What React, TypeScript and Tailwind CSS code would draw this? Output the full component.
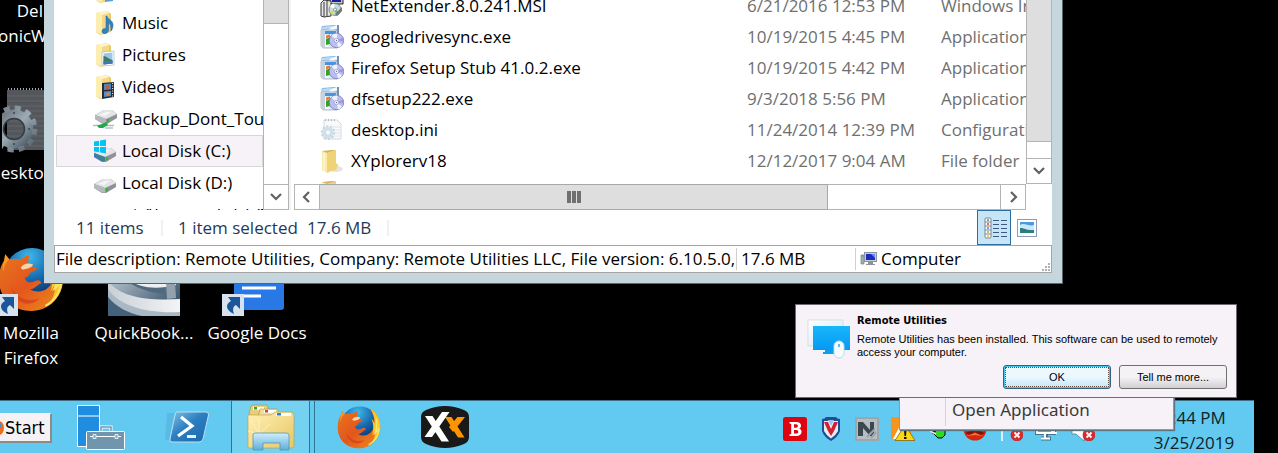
import type { ReactNode } from "react";

const uiFont = "font-['Open_Sans','Noto_Sans',sans-serif]";
const dialogFont = "font-['Liberation_Sans',sans-serif]";

/* ---------- small icons ---------- */

function FolderBase() {
  return (
    <>
      <path d="M3 2 L14 0 L18 3 V21 L7 24 L3 21 Z" fill="#e9c968" />
      <path d="M3 2 L9 4 V24 L3 21 Z" fill="#fbeeb0" />
      <path d="M9 4 L16 2 V20 L9 24 Z" fill="#f3d985" />
      <path d="M3 2 L14 0 L16 2 L9 4 Z" fill="#fdf5cd" />
    </>
  );
}

function TreeIcon({ kind }: { kind: string }) {
  return (
    <svg viewBox="0 0 24 24" className="h-6 w-6 shrink-0" aria-hidden="true">
      {kind === "document" && (
        <>
          <FolderBase />
          <path d="M12 10h8v12l-8 1z" fill="#5b9bd8" />
        </>
      )}
      {kind === "music" && (
        <>
          <FolderBase />
          <path d="M14 5 C15 9 20 9 20 14 C20 17 19 19 18 20 C18 16 18 13 15.500 12 V19 C15.500 23 9 24 9 20.500 C9 18 11 17 13 17.500 V5 Z" fill="#2f83c4" stroke="#1c5f9a" strokeWidth=".5" />
        </>
      )}
      {kind === "picture" && (
        <>
          <FolderBase />
          <path d="M9 9l12-1v14l-12 1z" fill="#fff" stroke="#aab8c4" strokeWidth=".7" />
          <path d="M10.500 10.500l9-1v11l-9 1z" fill="#9cc7ea" />
          <path d="M10.500 13c3 0 5 3 9 4v3.500l-9 1z" fill="#3f7d62" />
          <path d="M10.500 18l9 0v2.500l-9 1z" fill="#3e78b8" />
        </>
      )}
      {kind === "video" && (
        <>
          <FolderBase />
          <path d="M9 8l12-1v15l-12 2z" fill="#2b2b33" />
          <path d="M11 9l7-.5v6l-7 .5z" fill="#4b86c5" />
          <path d="M11 16.500l7-.5v5l-7 1z" fill="#4f8fd0" />
          <circle cx="14.500" cy="12" r="2" fill="#c65b3b" />
          <circle cx="15" cy="19" r="1.700" fill="#d68a32" />
          <path d="M19.600 8v14" stroke="#d9dde2" strokeWidth="1.200" strokeDasharray="1 1.500" />
        </>
      )}
      {["network", "windows", "disk"].includes(kind) && (
        <g transform={kind === "network" ? "translate(1 -5)" : kind === "windows" ? "translate(0 1)" : ""}>
          <path d="M1 13 L10 8 H18 L23 12 V16 L13 22 H9 L1 17 Z" fill="#8f9297" />
          <path d="M1 13 L10 8 H18 L23 12 L12 17 Z" fill="#e2e4e6" />
          <path d="M1 13 L12 17 V21.500 L9 21.500 L1 17 Z" fill={kind === "windows" ? "#3f7fa0" : "#b5b8bc"} />
          <path d="M5 13 L12 10 H17 L11 14Z" fill="#f6f6f7" />
          <rect x="13" y="17" width="2" height="3.500" fill="#36b52f" />
        </g>
      )}
      {kind === "windows" && (
        <path d="M1 2.500l5-.8v5.300h-5zM7 1.500l6-1v6.500h-6zM1 8h5v5.300l-5-.8zM7 8h6v6.400l-6-1z" fill="#00c4f4" />
      )}
      {kind === "network" && (
        <>
          <path d="M0 18.500h21" stroke="#b4bbc0" strokeWidth="1.500" />
          <path d="M4 18.500c4-1 7-2 9-3.500l2 3-5 3H6z" fill="#1da94a" />
          <path d="M12 21h8" stroke="#c9cfd3" strokeWidth="2" />
        </>
      )}
    </svg>
  );
}

function FileIcon({ kind }: { kind: string }) {
  return (
    <svg viewBox="0 0 24 24" className="h-6 w-6 shrink-0" aria-hidden="true">
      {kind === "setup" && (
        <>
          <path d="M2 1L15 0l4 1v8H1z" fill="#7fb2e8" />
          <path d="M1 2l9-1 5 1-5 4H1z" fill="#b9d8f5" />
          <path d="M11 2l6-2 2 3-5 2-6 1z" fill="#f3f8fd" />
          <path d="M17 0h2v8h-2z" fill="#7590b4" />
          <path d="M1 5h16v18H3l-2-2z" fill="#dbeafa" stroke="#8497ab" strokeWidth=".6" />
          <path d="M1 5h4v18H3l-2-2z" fill="#c9d2dc" />
          <path d="M5 6h11v3H5z" fill="#4a93dd" />
          <path d="M5 10h4v12H5z" fill="#f8fbff" />
          <path d="M6 14l4-2v7l-4 1z" fill="#2fa32b" />
          <path d="M6 10.500l4-1V12l-4 1.500z" fill="#e77a35" />
          <circle cx="16.500" cy="15.500" r="7.200" fill="#bcbdf0" stroke="#7478b0" strokeWidth=".8" />
          <path d="M16.500 15.500 11.500 10.500a7 7 0 0 1 6-1.800zM16.500 15.500l5.500 4a7 7 0 0 1-4 3z" fill="#f0f2fe" />
          <path d="M16.500 15.500l6.500-3a7 7 0 0 1 .3 4z" fill="#9a98e4" />
          <circle cx="16.500" cy="15.500" r="2.200" fill="#f8f8ff" stroke="#8488b8" strokeWidth=".6" />
          <circle cx="16.500" cy="15.500" r=".7" fill="#6b6f9c" />
        </>
      )}
      {kind === "msi" && (
        <>
          <path d="M10 1h13v9H10z" fill="#c7c7c7" stroke="#222" />
          <path d="M12 2h9v6h-9z" fill="#1a1f9e" />
          <path d="M1 9l3-3 7 1v15l-7 1-3-1z" fill="#e5e5e5" stroke="#333" strokeWidth="1" />
          <path d="M4 8v15M7 7v16" stroke="#555" strokeWidth="1.200" />
          <circle cx="15" cy="15.500" r="6" fill="#bfe0dd" stroke="#666" strokeWidth=".7" />
          <path d="M15 15.500l-5-3a6 6 0 0 1 4-3z" fill="#fff" />
          <path d="M15 15.500l5 3a6 6 0 0 1-4 3z" fill="#47b9bd" />
          <path d="M15 15.500l-3 5.500-2-3z" fill="#e6d44a" />
          <circle cx="15" cy="15.500" r="1.500" fill="#fff" stroke="#555" strokeWidth=".6" />
          <path d="M15 20l7-7v4l-5 5z" fill="#777" />
        </>
      )}
      {kind === "ini" && (
        <>
          <path d="M4 2h13l4 4v15H4z" fill="#f8f9fb" stroke="#d3d8e0" />
          <path d="M5 2h12" stroke="#b6bcc5" strokeDasharray="1 2" strokeWidth="2" />
          <path d="M12 9h8M14 12h6M14 15h6M14 18h6" stroke="#dfe4ee" />
          <circle cx="8" cy="14.500" r="4.500" fill="none" stroke="#d2e0ea" strokeWidth="3" />
          <circle cx="8" cy="14.500" r="6.500" fill="none" stroke="#bfd2e0" strokeWidth="1.500" strokeDasharray="2 2" />
          <circle cx="8" cy="14.500" r="2.700" fill="none" stroke="#a9c2d4" strokeWidth=".6" />
        </>
      )}
      {kind === "folder" && (
        <>
          <ellipse cx="16" cy="20" rx="7" ry="3" fill="#e4e4e4" />
          <path d="M2 2l5 2v20l-5-3z" fill="#f9ecaa" />
          <path d="M7 4l9-3v19l-9 4z" fill="#f0d377" />
          <path d="M2 2l10-1h4l-9 3z" fill="#d4b357" />
          <path d="M14 15c2-1 5 0 4 2l-2 4-4 1z" fill="#f1d471" />
          <path d="M4 4v17" stroke="#fffbe0" />
        </>
      )}
    </svg>
  );
}

function Firefox({ className }: { className: string }) {
  return (
    <svg viewBox="0 0 64 64" className={className} aria-hidden="true">
      <defs>
        <radialGradient id="fxGlobe" cx="45%" cy="15%" r="80%">
          <stop offset="0" stopColor="#3fb8ea" />
          <stop offset=".5" stopColor="#1668ae" />
          <stop offset="1" stopColor="#0b2458" />
        </radialGradient>
        <linearGradient id="fxFur" x1="0" y1="0" x2="1" y2="1">
          <stop offset="0" stopColor="#e8781f" />
          <stop offset=".5" stopColor="#e3561c" />
          <stop offset="1" stopColor="#ee8f1d" />
        </linearGradient>
      </defs>
      <circle cx="33" cy="30" r="28" fill="url(#fxGlobe)" />
      <path d="M48 5c9 5 15 15 15 27c0 17-13 31-31 31C14 63 1 50 1 33C1 24 3 18 6 14l1-6 4 5c4-1 7-1 11 0c4-3 6-4 9-4c-2 4-2 6-1 9c1 2 5 2 8 3c-1 3-4 4-7 5c-1 3-2 4-5 5c1 5 6 5 10 3c3-2 6 0 6 2c-4 1-5 5-11 6c10 6 22-1 23-13c1-9-2-17-6-24z" fill="url(#fxFur)" />
      <path d="M48 5c10 6 15 16 15 27c0 11-6 21-15 26c5-6 8-13 7-20l-4 6c3-10 2-18-1-24c3 2 4 5 5 7c0-8-2-15-7-22z" fill="#fbc928" />
      <path d="M57 20c2 8 1 15-2 21c3-2 5-5 6-8c0 11-6 20-15 25" fill="none" stroke="#f5e66e" strokeWidth="2" />
      <path d="M7 8l4 5c-4 3-5 7-6 12c-1-4 0-8 1-11z" fill="#f59a25" />
      <path d="M22 21c3-4 7-5 12-3c-1 3-5 4-10 5z" fill="#f6d4a6" />
      <path d="M12 36c3 14 16 19 28 15c-8 9-24 7-28-15z" fill="#cf3b1b" opacity=".65" />
    </svg>
  );
}

function ShortcutArrow() {
  return (
    <svg viewBox="0 0 22 22" className="absolute bottom-0 left-0 h-[22px] w-[22px]" aria-hidden="true">
      <path d="M0 0h22v22H0z" fill="#d6e3ef" />
      <path d="M6 3h12v12l-4-4c-4 2-3 6-2 9c-7-3-10-9-3-13z" fill="#1c5598" />
    </svg>
  );
}

/* ---------- file manager window ---------- */

const tree = [
  { label: "Documents", kind: "document" },
  { label: "Music", kind: "music" },
  { label: "Pictures", kind: "picture" },
  { label: "Videos", kind: "video" },
  { label: "Backup_Dont_Touch", kind: "network" },
  { label: "Local Disk (C:)", kind: "windows", selected: true },
  { label: "Local Disk (D:)", kind: "disk" },
  { label: "c$ (\\\\server-bdc) (Z:)", kind: "disk" },
];

const files = [
  ["NetExtender.8.0.241.MSI", "6/21/2016 12:53 PM", "Windows Installer", "msi"],
  ["googledrivesync.exe", "10/19/2015 4:45 PM", "Application", "setup"],
  ["Firefox Setup Stub 41.0.2.exe", "10/19/2015 4:42 PM", "Application", "setup"],
  ["dfsetup222.exe", "9/3/2018 5:56 PM", "Application", "setup"],
  ["desktop.ini", "11/24/2014 12:39 PM", "Configuration", "ini"],
  ["XYplorerv18", "12/12/2017 9:04 AM", "File folder", "folder"],
  ["", "", "", "folder"],
];

const chevrons = {
  down: "M3 5l5 5 5-5",
  left: "M10 3l-5 5 5 5",
  right: "M6 3l5 5-5 5",
};

function ScrollButton({ dir, label }: { dir: keyof typeof chevrons; label: string }) {
  return (
    <button
      type="button"
      aria-label={label}
      className="flex h-[26px] w-[26px] shrink-0 items-center justify-center border border-[#b4b4b4] bg-white"
    >
      <svg viewBox="0 0 16 16" className="h-4 w-4" aria-hidden="true">
        <path d={chevrons[dir]} fill="none" stroke="#606060" strokeWidth="2.200" />
      </svg>
    </button>
  );
}

function FileWindow() {
  return (
    <section
      aria-label="File manager"
      className="absolute left-11 top-0 w-[1019px] border-b border-r border-[#55666d] bg-[#c5d6dd] px-[10px] pb-[10px] text-[17px] leading-[22px]"
    >
      <div className="bg-white">
        <div className="flex h-[210px]">
          <nav aria-label="Folders" className="w-[209px] overflow-hidden pl-[2px]">
            <ul className="-mt-[25px]">
              {tree.map((t) => (
                <li key={t.label}>
                  <a
                    href="#folder"
                    className={
                      t.selected
                        ? "flex h-8 items-center gap-[5px] whitespace-nowrap border border-[#d8d6d9] bg-[#f6f2f7] pl-9"
                        : "flex h-8 items-center gap-[5px] whitespace-nowrap border border-transparent pl-9"
                    }
                  >
                    <TreeIcon kind={t.kind} />
                    {t.label}
                  </a>
                </li>
              ))}
            </ul>
          </nav>
          <div className="flex w-[26px] flex-col">
            <div className="h-6 border border-t-0 border-[#b4b4b4] bg-[#dedede]" />
            <div className="flex-1 border-x border-[#b4b4b4]" />
            <ScrollButton dir="down" label="Scroll folders down" />
          </div>
          <div className="mr-[3px] w-[2px] bg-[#f3f3f3]" />
          <div className="flex min-w-0 flex-1 flex-col">
            <div className="flex h-[184px]">
              <div className="min-w-0 flex-1 overflow-hidden">
                <table className="-mt-[10px] w-full table-fixed border-collapse">
                  <tbody>
                    {files.map(([name, date, type, kind], i) => (
                      <tr key={i} className="h-[31px] whitespace-nowrap text-[#6f6f6f]">
                        <td className="w-[453px] p-0 pl-[26px] text-black">
                          <span className="flex items-center gap-[7px]">
                            <FileIcon kind={kind} />
                            {name}
                          </span>
                        </td>
                        <td className="w-[194px] p-0">{date}</td>
                        <td className="overflow-hidden p-0">{type}</td>
                      </tr>
                    ))}
                  </tbody>
                </table>
              </div>
              <div className="flex w-[26px] flex-col">
                <div className="h-[142px] border border-t-0 border-[#b4b4b4] bg-[#dedede]" />
                <div className="flex-1 border-x border-[#b4b4b4]" />
                <ScrollButton dir="down" label="Scroll files down" />
              </div>
            </div>
            <div className="mr-[26px] flex h-[26px]">
              <ScrollButton dir="left" label="Scroll left" />
              <div className="flex w-[508px] items-center justify-center gap-px border border-l-0 border-[#a8a8a8] bg-[#dedede]">
                <span className="h-3 w-1 bg-[#707070]" />
                <span className="h-3 w-1 bg-[#707070]" />
                <span className="h-3 w-1 bg-[#707070]" />
              </div>
              <div className="flex-1 border-y border-[#b4b4b4]" />
              <ScrollButton dir="right" label="Scroll right" />
            </div>
          </div>
        </div>

        <div className="flex h-[35px] items-center pl-[22px] text-[#1e395b]">
          <span className="w-[85px]">11 items</span>
          <span className="h-4 w-[2px] bg-[#f1f1f1]" />
          <span className="ml-[15px] w-[129px] whitespace-nowrap">1 item selected</span>
          <span className="w-20">17.6 MB</span>
          <span className="h-4 w-[2px] bg-[#f1f1f1]" />
          <button
            type="button"
            aria-label="Details view"
            className="ml-auto flex h-[35px] w-[34px] items-center justify-center border border-[#2f6f9f] bg-[#c6e5f7]"
          >
            <svg viewBox="0 0 24 24" className="ml-[2px] h-6 w-6" aria-hidden="true">
              <rect x="2" y="2" width="6" height="20" rx="1" fill="#fff" stroke="#7d8693" />
              <path d="M2 6h6M2 10h6M2 14h6M2 18h6" stroke="#7d8693" />
              <path d="M4 4h2" stroke="#459a67" strokeWidth="1.500" />
              <path d="M4 8h2" stroke="#dd3535" strokeWidth="1.500" />
              <path d="M4 12h2" stroke="#3c7fd6" strokeWidth="1.500" />
              <path d="M4 16h2" stroke="#95b82c" strokeWidth="1.500" />
              <path d="M4 20h2" stroke="#e6c51e" strokeWidth="1.500" />
              <path d="M10 4.500h6m2 0h6M10 8.500h6m2 0h6M10 12.500h6m2 0h6M10 16.500h6m2 0h6M10 20.500h6m2 0h6" stroke="#3d5a80" />
            </svg>
          </button>
          <button type="button" aria-label="Thumbnail view" className="ml-[6px] mr-[15px]">
            <svg viewBox="0 0 20 18" className="h-[18px] w-5" aria-hidden="true">
              <rect x=".5" y=".5" width="19" height="17" fill="#fff" stroke="#8f9cb5" />
              <path d="M3 3h14v11H3z" fill="#4a9be0" />
              <path d="M3 6c4-3 9 2 14 0v5H3z" fill="#c9e9f5" />
              <path d="M3 9c5 0 7 3 14 2v3H3z" fill="#2a7f7c" />
            </svg>
          </button>
        </div>

        <div className="flex h-7 items-center border border-[#a5a5a5]">
          <span className="w-[682px] overflow-hidden whitespace-nowrap border-r border-[#d0d0d0] pl-px">
            File description: Remote Utilities, Company: Remote Utilities LLC, File version: 6.10.5.0,
          </span>
          <span className="w-[119px] border-r border-[#d0d0d0] pl-1">17.6 MB</span>
          <span className="flex items-center gap-1 pl-1">
            <svg viewBox="0 0 17 16" className="h-4 w-[17px]" aria-hidden="true">
              <path d="M1 4h3v9H1z" fill="#a9adb3" stroke="#777c84" strokeWidth=".7" />
              <path d="M1.500 5h2" stroke="#48b848" />
              <rect x="4.500" y="1.500" width="12" height="9" fill="#c6cbd4" stroke="#8d93a0" />
              <path d="M6 3h9v6H6z" fill="#1a2bc0" />
              <path d="M11 3h4v4z" fill="#6d8bf0" />
              <path d="M8 11h5v2H8zM6 13h9v1H6z" fill="#8d9299" />
            </svg>
            Computer
          </span>
          <svg viewBox="0 0 12 12" className="ml-auto h-3 w-3 self-end" aria-hidden="true">
            <path d="M9 2h2v2H9zM9 5h2v2H9zM9 8h2v2H9zM6 5h2v2H6zM6 8h2v2H6zM3 8h2v2H3z" fill="#b1b1b1" transform="translate(0 1)" />
          </svg>
        </div>
      </div>
    </section>
  );
}

/* ---------- desktop ---------- */

function Desktop() {
  return (
    <div className="text-center text-[17px] leading-[25px] text-white">
      <div className="absolute -left-4 -top-[2px] w-24">
        Dell
        <br />
        SonicWALL
      </div>
      <a href="#desktop-ini" className="absolute -left-4 top-[86px] flex w-[100px] flex-col items-center">
        <svg viewBox="0 0 64 70" className="h-[70px] w-16" aria-hidden="true">
          <defs>
            <linearGradient id="gearSteel" x1="0" y1="0" x2="1" y2="1">
              <stop offset="0" stopColor="#69727b" />
              <stop offset=".5" stopColor="#9dabb5" />
              <stop offset="1" stopColor="#4c5a66" />
            </linearGradient>
          </defs>
          <path d="M5 4h44v60H5z" fill="#53565a" />
          <path d="M5 10h44M5 15h44M5 20h44M5 25h44M5 30h44M5 35h44M5 40h44M5 45h44M5 50h44M5 55h44M5 60h44" stroke="#65686c" />
          <path d="M6 3h44" stroke="#a3a5a8" strokeWidth="2" strokeDasharray="1 2" />
          <circle cx="12" cy="43" r="15" fill="none" stroke="url(#gearSteel)" strokeWidth="9" />
          <circle cx="12" cy="43" r="21" fill="none" stroke="url(#gearSteel)" strokeWidth="5" strokeDasharray="6 5" />
          <circle cx="12" cy="43" r="10.500" fill="none" stroke="#333b43" strokeWidth="1.500" />
          <circle cx="12" cy="27" r="1" fill="#39434c" />
          <circle cx="27" cy="43" r="1" fill="#39434c" />
          <circle cx="12" cy="58" r="1" fill="#39434c" />
        </svg>
        <span className="mt-1">desktop.ini</span>
      </a>
      <a href="#firefox" className="absolute left-0 top-[245px] w-[62px]">
        <span className="relative -ml-[2px] block h-[71px]">
          <Firefox className="h-[68px] w-[66px] max-w-none" />
          <span className="absolute -left-[2px] bottom-0 h-[22px] w-[22px]">
            <ShortcutArrow />
          </span>
        </span>
        <span className="mt-1 block">Mozilla Firefox</span>
      </a>
      <a href="#quickbooks" className="absolute left-[92px] top-[245px] flex w-[104px] flex-col items-center">
        <svg viewBox="0 0 72 71" className="h-[71px] w-[72px]" aria-hidden="true">
          <defs>
            <linearGradient id="qbBack" x1="0" y1="0" x2="1" y2="1">
              <stop offset="0" stopColor="#e5edf2" />
              <stop offset=".5" stopColor="#8496a5" />
              <stop offset="1" stopColor="#24425c" />
            </linearGradient>
            <linearGradient id="qbBand" x1="0" y1="0" x2="1" y2="0">
              <stop offset="0" stopColor="#c7d0d7" />
              <stop offset="1" stopColor="#f4f4f6" />
            </linearGradient>
          </defs>
          <path d="M0 0h72v71H0z" fill="url(#qbBack)" />
          <path d="M0 36c12 16 38 20 72 18v14c-34 3-64-8-72-24z" fill="url(#qbBand)" />
          <path d="M0 44c10 16 38 25 72 23v4H20C10 66 3 58 0 50z" fill="#a9b8c4" />
          <path d="M0 52c8 10 20 16 34 19H0z" fill="#43617a" />
          <path d="M20 37c12 8 28 12 38 12l-2-10z" fill="#52687c" />
          <path d="M18 34h50v6c-20 5-36 3-50-6z" fill="#edf0f2" />
          <path d="M58 36l9 2 1 15-9 1z" fill="#92a1ad" />
        </svg>
        <span className="mt-1">QuickBook...</span>
      </a>
      <a href="#google-docs" className="absolute left-[200px] top-[245px] flex w-[114px] flex-col items-center">
        <span className="relative -ml-1 h-[71px] w-[66px]">
          <svg viewBox="0 0 66 71" className="h-[71px] w-[66px]" aria-hidden="true">
            <path d="M12 0h50v62q0 3-3 3H15q-3 0-3-3z" fill="#2878e5" />
            <path d="M20 43h34M20 51h19" stroke="#fff" strokeWidth="3" />
          </svg>
          <ShortcutArrow />
        </span>
        <span className="mt-1">Google Docs</span>
      </a>
    </div>
  );
}

/* ---------- taskbar ---------- */

function Slot({ label, children }: { label: string; children: ReactNode }) {
  return (
    <button type="button" aria-label={label} className="flex w-[86px] items-center justify-center">
      {children}
    </button>
  );
}

function TrayIcon({ kind }: { kind: string }) {
  return (
    <svg viewBox="0 0 24 24" className="h-6 w-6" aria-hidden="true">
      {kind === "Bitdefender" && (
        <>
          <rect width="24" height="24" rx="2.500" fill="#dc0510" />
          <path fillRule="evenodd" d="M6.500 5h7c5 0 6 5 2.700 6.600c4 1.400 3 7.400-2.700 7.400h-7v-1.500l1.700-.5V7l-1.700-.5zM11 7.300v3.500h2c2.500 0 2.500-3.500 0-3.500zM11 13v3.600h2.300c2.700 0 2.700-3.600 0-3.600z" fill="#fff" />
        </>
      )}
      {kind === "Security shield" && (
        <>
          <path d="M3 2q3 0 4-2h10q1 2 4 2v12q-2 6-9 10q-7-4-9-10z" fill="#1c4f93" />
          <path d="M5 4h14v10q-2 4-7 7.500q-5-3.500-7-7.500z" fill="#e8edf2" />
          <path d="M5 5h4l3 7 3-7h4l-4 9-3 5-3-5z" fill="#d41f33" />
          <path d="M9 3h6l-3 6z" fill="#97c3e8" />
        </>
      )}
      {kind === "Network monitor" && (
        <>
          <path d="M0 0h24v24H0z" fill="#9da6aa" />
          <path d="M2 2h20v20H2z" fill="#b6bec2" />
          <path d="M3 5h5l7 8V5h4v14h-4L8 11v8H3z" fill="#3c4850" />
          <path d="M12 20l8-8M16 21l5-6" stroke="#9aa4a9" strokeWidth="2" />
        </>
      )}
      {kind === "Warning" && (
        <>
          <path d="M0 0h20v22H0z" fill="#f7941e" />
          <path d="M2 22l9-17 3 3-7 14z" fill="#fff" />
          <path d="M14 8l10 15.500H4z" fill="#fbd615" stroke="#8a6500" strokeWidth=".8" />
          <path d="M13 13h2.500l-.5 6h-1.500zM13 20h2.500v2H13z" fill="#111" />
        </>
      )}
      {kind === "Safely remove hardware" && (
        <>
          <path d="M2 13h8v4H6z" fill="#111" />
          <path d="M9 13h9v5l-3 3h-4l-4-4z" fill="#2bdb24" stroke="#000" />
          <path d="M3 14l6 3" stroke="#eee" strokeWidth="1.500" />
        </>
      )}
      {kind === "Antivirus" && (
        <>
          <circle cx="12" cy="12" r="11.500" fill="#d5260f" />
          <path d="M2 16l10-4 10 4-5 2-5-3-5 3z" fill="#7d140a" />
          <path d="M3 19l9-3 8 3-8-1z" fill="#f67b3b" />
        </>
      )}
      {kind === "Action center" && <path d="M3 2v22M4 3h13v8H4" fill="none" stroke="#fff" strokeWidth="1.500" />}
      {kind === "Network" && (
        <>
          <path d="M2 3h17v13H2zM11 16v5M6 21.500h10" fill="none" stroke="#47738a" strokeWidth="4" />
          <path d="M2 3h17v13H2zM10 16v5M6 21.500h9" fill="#5fb5de" stroke="#fff" strokeWidth="2" />
          <path d="M17 8v8h5" fill="none" stroke="#fff" strokeWidth="2" />
        </>
      )}
      {kind === "Volume" && <path d="M1 9h4l8-6v21l-8-7H1z" fill="#fff" stroke="#47738a" strokeWidth=".7" />}
      {(kind === "Action center" || kind === "Volume") && (
        <>
          <circle cx="18" cy="18" r="6" fill="#dd2b2c" stroke="#b41118" strokeWidth=".6" />
          <path d="M15.500 15.500l5 5M20.500 15.500l-5 5" stroke="#fff" strokeWidth="1.800" />
        </>
      )}
    </svg>
  );
}

const tray = [
  "Bitdefender",
  "Security shield",
  "Network monitor",
  "Warning",
  "Safely remove hardware",
  "Antivirus",
  "Action center",
  "Network",
  "Volume",
];

function Taskbar() {
  return (
    <footer className="mr-6 flex h-[53px] border-t border-[#3f6f86] bg-[#62caf0]">
      <button
        type="button"
        className="mr-[6px] mt-3 flex h-[30px] w-[52px] items-center border-b-2 border-r-2 border-t border-b-[#8b8b8b] border-r-[#8b8b8b] border-t-white bg-[#f5f2f6] font-['DejaVu_Sans_Condensed','DejaVu_Sans',sans-serif] text-lg text-black"
      >
        <svg viewBox="0 0 4 14" className="mr-px h-[14px] w-1 shrink-0" aria-hidden="true">
          <path d="M0 0q4 2 4 7t-4 7z" fill="#ee6b24" />
          <path d="M0 2q2 2 1 5H0z" fill="#3c96c6" />
        </svg>
        Start
      </button>
      <Slot label="Server Manager">
        <svg viewBox="0 0 48 46" className="h-[46px] w-12" aria-hidden="true">
          <path d="M.5 1.500h22v41H.5zM.5 12h22" fill="#1f8ee0" stroke="#fff" />
          <path d="M24 27v-4h10v4" fill="none" stroke="#fff" strokeWidth="3" />
          <path d="M24 27v-4h10v4" fill="none" stroke="#7295ae" strokeWidth="1.500" />
          <rect x="9.500" y="27.500" width="38" height="18" rx="1" fill="#7295ae" stroke="#fff" />
          <path d="M13 32.500h31" stroke="#fff" />
          <path d="M16 30.500h3v4h-3zM38 30.500h3v4h-3z" fill="#5fb3dd" stroke="#fff" strokeWidth=".8" />
        </svg>
      </Slot>
      <Slot label="Windows PowerShell">
        <svg viewBox="0 0 46 32" className="h-8 w-[46px]" aria-hidden="true">
          <defs>
            <linearGradient id="psBlue" x1="0" y1="0" x2="1" y2="1">
              <stop offset="0" stopColor="#84c2e8" />
              <stop offset=".45" stopColor="#2c7fc0" />
              <stop offset="1" stopColor="#1c67ad" />
            </linearGradient>
          </defs>
          <path d="M3 2h8L5 29H1z" fill="#54afdb" opacity=".6" />
          <path d="M13 1h29q3 0 2.500 3L39 28q-1 3-4 3H8q-3 0-2-3l5-24q.5-3 2-3z" fill="url(#psBlue)" stroke="#b9e0f2" />
          <path d="M17 6l11 9-14 10" fill="none" stroke="#fff" strokeWidth="3.200" />
          <path d="M23 25.500h9" stroke="#e4f2fb" strokeWidth="3" />
        </svg>
      </Slot>
      <div className="flex w-[86px] pl-px pr-px">
        <button
          type="button"
          aria-label="File Explorer"
          className="flex w-[79px] items-center justify-center border-x border-[#32758f] bg-[#74d2f0]"
        >
          <svg viewBox="0 0 48 47" className="h-[47px] w-12" aria-hidden="true">
            <defs>
              <linearGradient id="exFolder" x1="0" y1="0" x2="1" y2="1">
                <stop offset="0" stopColor="#fff1b5" />
                <stop offset="1" stopColor="#e8c662" />
              </linearGradient>
              <linearGradient id="exStand" x1="0" y1="0" x2="0" y2="1">
                <stop offset="0" stopColor="#d0eefb" />
                <stop offset="1" stopColor="#5faedb" />
              </linearGradient>
            </defs>
            <path d="M2 10l2-8 2-1h14l2 5v10H2z" fill="#e9cd7a" stroke="#a98d3c" strokeWidth=".6" />
            <path d="M6 3h11v3H6z" fill="#fff" />
            <path d="M7 3h3v2.500H7z" fill="#2ea836" />
            <path d="M11 14l2-9h17l3 5v8H11z" fill="#f3dc94" stroke="#a98d3c" strokeWidth=".6" />
            <path d="M17 6h12v3H17z" fill="#fff" />
            <path d="M18 6h3v2.500h-3z" fill="#d9471f" />
            <path d="M1 11h23l4-3h17l2 3v31q0 2-2 2H2q-1 0-1-2z" fill="url(#exFolder)" stroke="#bb9b45" strokeWidth=".6" />
            <path d="M29 9h15v3H29z" fill="#fff" />
            <path d="M30 9h4v2.500h-4z" fill="#2d80d8" />
            <path d="M12 30L4 16M12 30L12 14M12 30L23 20M12 30L1 27" stroke="#fffbe4" strokeWidth="1" opacity=".6" />
            <path d="M6 46V31q0-2 2-2h31q3 0 3 2v15h-9v-7H16v7z" fill="url(#exStand)" stroke="#4d97bd" strokeWidth=".8" />
          </svg>
        </button>
        <span className="w-[5px] border-r border-[#32758f]" />
      </div>
      <Slot label="Mozilla Firefox">
        <Firefox className="h-11 w-11" />
      </Slot>
      <Slot label="XYplorer">
        <svg viewBox="0 0 48 42" className="h-[42px] w-12" aria-hidden="true">
          <path d="M5 4Q24-4 43 4q5 2 5 7v20q0 5-5 7q-19 8-38 0q-5-2-5-7V11q0-5 5-7z" fill="#191919" />
          <path d="M24 11h6.500l13 20.500H37zM36.500 11H44L32 26l-4-5z" fill="#ff9500" />
          <path d="M4 10h7.500L28 35.500h-7.500zM21 6h7.500L11 31H3.500z" fill="#fff" />
        </svg>
      </Slot>
      <div className="ml-auto flex items-center pt-1">
        {tray.map((t) => (
          <button key={t} type="button" aria-label={t} className="flex w-9 justify-center">
            <TrayIcon kind={t} />
          </button>
        ))}
      </div>
      <time className="ml-[33px] w-[120px] pt-1 text-center text-[17px] leading-[25px] text-[#10212a]">
        2:44 PM
        <br />
        3/25/2019
      </time>
    </footer>
  );
}

/* ---------- popups ---------- */

function Toast() {
  return (
    <section
      role="dialog"
      aria-labelledby="toast-title"
      className={`absolute bottom-[55px] right-[41px] flex w-[442px] gap-[5px] border border-[#6c6c6c] bg-[#f6f2f7] pb-2 pl-[10px] pr-[9px] pt-[9px] text-[11px] leading-[13px] text-black ${dialogFont}`}
    >
      <svg viewBox="0 0 46 44" className="mt-1 h-11 w-[46px] shrink-0" aria-hidden="true">
        <defs>
          <linearGradient id="ruScreen" x1="0" y1="0" x2="0" y2="1">
            <stop offset="0" stopColor="#17b7fb" />
            <stop offset="1" stopColor="#0799f2" />
          </linearGradient>
          <linearGradient id="ruBack" x1="0" y1="0" x2="1" y2="1">
            <stop offset="0" stopColor="#fff" />
            <stop offset="1" stopColor="#cbe9f8" />
          </linearGradient>
        </defs>
        <path d="M2 2h35v26H2z" fill="url(#ruBack)" stroke="#d0d6db" strokeWidth=".7" />
        <path d="M7 8h37v24H7z" fill="url(#ruScreen)" />
        <path d="M19 32h9v2h2v2H17v-2h2z" fill="#0c9ff0" />
        <rect x="28" y="23" width="10" height="17" rx="5" fill="#f9fcff" stroke="#b8dcef" />
        <path d="M33 26v3" stroke="#24a7ec" strokeWidth="1.500" />
      </svg>
      <div className="min-w-0 flex-1">
        <h2 id="toast-title" className="font-['DejaVu_Sans_Condensed','DejaVu_Sans',sans-serif] font-bold">
          Remote Utilities
        </h2>
        <p className="mt-[6px] w-[370px] max-w-full">
          Remote Utilities has been installed. This software can be used to remotely access your computer.
        </p>
        <div className="mt-[6px] flex justify-end gap-2">
          <button
            type="button"
            className="h-6 w-[108px] rounded-[3px] border border-[#2c628b] bg-linear-to-b from-[#edf8fe] from-50% to-[#bfe6fa] p-px shadow-[inset_0_0_0_1px_#43c4ef]"
          >
            <span className="flex h-full items-center justify-center border border-dotted border-[#6b4a3c]">OK</span>
          </button>
          <button
            type="button"
            className="h-6 w-[108px] rounded-[3px] border border-[#707070] bg-linear-to-b from-[#f4f2f4] from-50% to-[#d2d0d3]"
          >
            Tell me more...
          </button>
        </div>
      </div>
    </section>
  );
}

function ContextMenu() {
  return (
    <div
      role="menu"
      className="absolute bottom-[23px] right-[104px] flex h-10 w-[275px] items-stretch border border-[#979797] bg-[#f6f2f7] pb-[3px] shadow-[1px_1px_1px_#5c7480]"
    >
      <span className="w-[46px] border-r border-[#d4d2d5]" />
      <button
        type="button"
        role="menuitem"
        className="flex items-end pb-1 pl-[6px] font-['Noto_Sans','Open_Sans',sans-serif] text-[17px] leading-6 text-[#3a3a3a]"
      >
        Open Application
      </button>
    </div>
  );
}

export default function App() {
  return (
    <main className={`relative flex min-h-screen flex-col overflow-hidden bg-black ${uiFont}`}>
      <div className="flex-1">
        <Desktop />
        <FileWindow />
      </div>
      <Taskbar />
      <ContextMenu />
      <Toast />
    </main>
  );
}
